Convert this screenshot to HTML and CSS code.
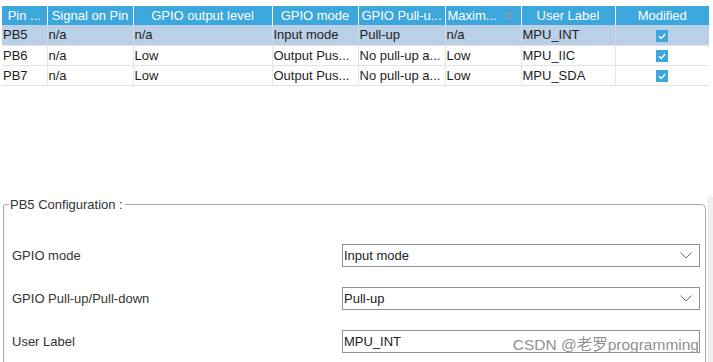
FILE: index.html
```html
<!DOCTYPE html>
<html>
<head>
<meta charset="utf-8">
<link rel="stylesheet" href="styles.css">
</head>
<body>
<div class="page">
  <div class="table-area">
    <table class="grid">
      <colgroup>
        <col style="width:45px"><col style="width:86px"><col style="width:139px"><col style="width:86px">
        <col style="width:87px"><col style="width:76px"><col style="width:94px"><col style="width:94px">
      </colgroup>
      <thead>
        <tr>
          <th>Pin ...</th>
          <th>Signal on Pin</th>
          <th>GPIO output level</th>
          <th>GPIO mode</th>
          <th>GPIO Pull-u...</th>
          <th class="sort"><span>Maxim...</span><svg class="sort-ic" width="8" height="10" viewBox="0 0 8 10"><path d="M0 4 L4 0 L8 4 Z" fill="#7d9fb6"/><path d="M0 6 L4 10 L8 6 Z" fill="#7d9fb6"/></svg></th>
          <th>User Label</th>
          <th>Modified</th>
        </tr>
      </thead>
      <tbody>
        <tr class="sel">
          <td>PB5</td><td>n/a</td><td>n/a</td><td>Input mode</td><td>Pull-up</td><td>n/a</td><td>MPU_INT</td>
          <td class="chk"><span class="box"><svg width="12" height="12" viewBox="0 0 12 12"><path d="M3 6.2 L5.2 8.4 L9.2 4" fill="none" stroke="#fff" stroke-width="1.4"/></svg></span></td>
        </tr>
        <tr>
          <td>PB6</td><td>n/a</td><td>Low</td><td>Output Pus...</td><td>No pull-up a...</td><td>Low</td><td>MPU_IIC</td>
          <td class="chk"><span class="box"><svg width="12" height="12" viewBox="0 0 12 12"><path d="M3 6.2 L5.2 8.4 L9.2 4" fill="none" stroke="#fff" stroke-width="1.4"/></svg></span></td>
        </tr>
        <tr>
          <td>PB7</td><td>n/a</td><td>Low</td><td>Output Pus...</td><td>No pull-up a...</td><td>Low</td><td>MPU_SDA</td>
          <td class="chk"><span class="box"><svg width="12" height="12" viewBox="0 0 12 12"><path d="M3 6.2 L5.2 8.4 L9.2 4" fill="none" stroke="#fff" stroke-width="1.4"/></svg></span></td>
        </tr>
      </tbody>
    </table>
  </div>
  <div class="config-area">
    <fieldset class="config">
      <legend>PB5 Configuration :</legend>
      <div class="form">
        <div class="row">
          <span class="label">GPIO mode</span>
          <div class="field select"><span>Input mode</span><svg width="12" height="7" viewBox="0 0 12 7"><path d="M0.5 0.5 L6 6 L11.5 0.5" fill="none" stroke="#707478" stroke-width="1"/></svg></div>
        </div>
        <div class="row">
          <span class="label">GPIO Pull-up/Pull-down</span>
          <div class="field select"><span>Pull-up</span><svg width="12" height="7" viewBox="0 0 12 7"><path d="M0.5 0.5 L6 6 L11.5 0.5" fill="none" stroke="#707478" stroke-width="1"/></svg></div>
        </div>
        <div class="row">
          <span class="label">User Label</span>
          <div class="field input"><span>MPU_INT</span></div>
        </div>
      </div>
    </fieldset>
    <div class="scrollbar"></div>
    <div class="watermark">CSDN @老罗programming</div>
  </div>
</div>
</body>
</html>
```
FILE: styles.css
```css
html, body {
  margin: 0;
  padding: 0;
  background: #fff;
}
body {
  font-family: "Liberation Sans", Arial, "Noto Sans CJK SC", sans-serif;
  font-size: 13px;
  color: #1e1e1e;
  width: 713px;
  height: 362px;
  overflow: hidden;
}
.page {
  display: flex;
  flex-direction: column;
  height: 362px;
}
.table-area {
  height: 197px;
  padding: 6px 0 0 2px;
  box-sizing: border-box;
}
.grid {
  border-collapse: collapse;
  table-layout: fixed;
  width: 707px;
}
.grid th {
  background: #3ba7dc;
  color: #fff;
  font-weight: normal;
  height: 19px;
  padding: 0 2px;
  text-align: center;
  white-space: nowrap;
  overflow: hidden;
  border-right: 1px solid #fff;
  box-sizing: border-box;
}
.grid th:last-child { border-right: none; }
.grid th.sort {
  text-align: left;
  position: relative;
}
.sort-ic {
  position: absolute;
  right: 8px;
  top: 5px;
}
.grid td {
  height: 20px;
  padding: 0 1px;
  white-space: nowrap;
  overflow: hidden;
  border-right: 1px solid #e6e6e6;
  border-bottom: 1px solid #e3e3e3;
  box-sizing: border-box;
}
.grid td:last-child { border-right: none; }
.grid tr.sel td {
  background: #b9d0e6;
  border-right-color: #c8d9ea;
}
.grid td.chk {
  text-align: center;
}
.box {
  display: inline-block;
  width: 12px;
  height: 12px;
  background: #3ba7dc;
  vertical-align: middle;
  line-height: 0;
}
.config-area {
  flex: 1;
  position: relative;
  display: flex;
}
.config {
  flex: 1;
  margin: 0 2px 0 3px;
  padding: 32px 6px 0 8px;
  border: 1px solid #a4a8ad;
  border-bottom: none;
  border-radius: 3px 5px 0 0;
  min-width: 0;
}
.config legend {
  padding: 0 2px 0 1px;
  margin-left: -3px;
  color: #333;
  font-size: 13px;
}
.form {
  display: flex;
  flex-direction: column;
  gap: 20px;
}
.row {
  display: grid;
  grid-template-columns: 330px 358px;
  align-items: center;
  height: 23px;
}
.label {
  color: #333;
}
.field {
  height: 23px;
  box-sizing: border-box;
  border: 1px solid #8c9097;
  display: flex;
  align-items: center;
  justify-content: space-between;
  padding: 0 7px 0 1px;
  color: #222;
}
.scrollbar {
  width: 4px;
  background: #f0f0f0;
  border-left: 1px solid #e6e6e6;
}
.watermark {
  position: absolute;
  right: 14px;
  bottom: 8px;
  font-size: 15.5px;
  color: rgba(120, 120, 120, 0.85);
  text-shadow: 0 0 1px #fff;
}
```
